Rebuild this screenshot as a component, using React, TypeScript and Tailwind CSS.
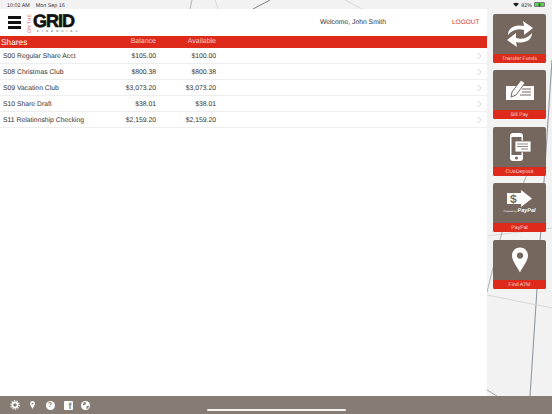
import React from "react";

const rows = [
  ["S00 Regular Share Acct", "$105.00", "$100.00"],
  ["S08 Christmas Club", "$800.38", "$800.38"],
  ["S09 Vacation Club", "$3,073.20", "$3,073.20"],
  ["S10 Share Draft", "$38.01", "$38.01"],
  ["S11 Relationship Checking", "$2,159.20", "$2,159.20"],
];

function Tile({ label, children, mb }: { label: string; children: React.ReactNode; mb: string }) {
  return (
    <div className={`w-[53px] h-[49px] rounded-[2px] bg-[#75675e] flex flex-col overflow-hidden ${mb}`}>
      <div className="flex-1 flex items-center justify-center">{children}</div>
      <div className="h-[9px] bg-[#dd2a1b] text-[#f8dcd8] text-[5.2px] leading-[10px] text-center">{label}</div>
    </div>
  );
}

export default function App() {
  return (
    <div className="relative w-[552px] h-[414px] overflow-hidden bg-[#f2f2f2] font-['Liberation_Sans',Arial,sans-serif] [text-rendering:geometricPrecision]">
      <svg className="absolute inset-0" width="552" height="414" fill="none">
        <path d="M253 9 L270 0" stroke="#808488" strokeWidth="1" />
        <path d="M190 9 L192 0" stroke="#a0a2a5" strokeWidth="0.8" />
        <path d="M215 0 L218 9 M345 0 L362 9" stroke="#d2d2d2" strokeWidth="0.8" />
        <path d="M552 60 L550 90 L530 396" stroke="#8f98a3" strokeWidth="1.1" />
        <path d="M487 295 L552 308 M487 236 L552 228" stroke="#d8d8d8" strokeWidth="1" />
        <path d="M529 170 L502 232 L487 292" stroke="#a3a8ad" strokeWidth="0.9" />
        <path d="M487 390 L497 396" stroke="#9aa0a6" strokeWidth="0.9" />
      </svg>

      <div className="relative h-[9px] flex items-center justify-between pl-[7px] pr-[7px] text-[5.4px] text-[#333]">
        <span className="flex gap-[6px] mt-[3px]"><span>10:02 AM</span><span>Mon Sep 16</span></span>
        <span className="flex items-center gap-[2px]">
          <svg width="6" height="5" viewBox="0 0 12 9"><path d="M6 9 L0 3 Q6 -1.5 12 3 Z" fill="#222" /></svg>
          <span className="mt-[3px]">82%</span>
          <span className="w-[11px] h-[5px] rounded-[1px] border-[0.5px] border-[#777] bg-[#5ed04c] flex items-center justify-center">
            <svg width="3" height="4" viewBox="0 0 6 8"><path d="M3.5 0 L0.5 4.5 H2.5 L2 8 L5.5 3 H3.3 Z" fill="#111" /></svg>
          </span>
        </span>
      </div>

      <div className="relative flex h-[387px]">
        <div className="w-[487px] bg-white flex flex-col">
          <div className="h-[26.5px] flex items-center shrink-0">
            <div className="ml-[8px] w-[13px] flex flex-col gap-[2px]">
              <div className="h-[3px] bg-[#111]" />
              <div className="h-[3px] bg-[#111]" />
              <div className="h-[3px] bg-[#111]" />
            </div>
            <div className="ml-[7px] w-[47px] flex items-start h-[22px]">
              <span className="text-[5px] leading-[5px] text-[#e0574a] [writing-mode:vertical-rl] rotate-180 mt-[4px] h-[18px] text-center whitespace-nowrap">ON THE</span>
              <div className="flex flex-col w-[42px]">
                <span className="text-[18px] leading-[14px] font-bold text-[#111] tracking-[-1px] mt-[3px] [-webkit-text-stroke:0.6px_#111]">GRID</span>
                <span className="text-[2.8px] leading-[3px] tracking-[3.2px] text-[#333] ml-[4px] mt-[2px] whitespace-nowrap">FINANCIAL</span>
              </div>
            </div>
            <div className="ml-[245px] w-[132px] text-[6.8px] leading-[10px] pt-[2px] text-[#333] whitespace-nowrap">Welcome, John Smith</div>
            <div className="text-[6.5px] leading-[10px] pt-[2px] text-[#dd3a2c]">LOGOUT</div>
          </div>

          <div className="h-[12px] pt-[2px] bg-[#dd2a1b] flex items-center text-white shrink-0">
            <span className="ml-[1px] w-[100px] text-[8.3px]">Shares</span>
            <span className="w-[55px] text-right text-[7px] text-[#f6cfca]">Balance</span>
            <span className="w-[60px] text-right text-[7px] text-[#f6cfca]">Available</span>
          </div>

          {rows.map((r) => (
            <div key={r[0]} className="h-[16px] pt-[4px] flex items-center border-b border-[#eee] text-[6.8px] text-[#333] shrink-0 relative">
              <span className="ml-[3px] w-[98px] whitespace-nowrap">{r[0]}</span>
              <span className="w-[55px] text-right">{r[1]}</span>
              <span className="w-[60px] text-right">{r[2]}</span>
              <svg className="absolute left-[477px] top-[4px]" width="5" height="8" viewBox="0 0 5 8" fill="none">
                <path d="M1 1 L4 4 L1 7" stroke="#c8c8c8" strokeWidth="0.8" />
              </svg>
            </div>
          ))}
        </div>

        <div className="flex-1 flex flex-col pl-[6px] pt-[5px]">
          <Tile label="Transfer Funds" mb="mb-[7px]">
            <svg width="28" height="28" viewBox="0 0 28 28" fill="#fff">
              <path d="M2 15 C2 8 9 4 18 6 L17 1 L27 8 L18 15 L18 10 C12 8 6 10 2 15 Z" />
              <path d="M26 13 C26 20 19 24 10 22 L11 27 L1 20 L10 13 L10 18 C16 20 22 18 26 13 Z" />
            </svg>
          </Tile>
          <Tile label="Bill Pay" mb="mb-[8px]">
            <svg width="30" height="24" viewBox="0 0 30 24">
              <rect x="1" y="8" width="28" height="14" fill="#fff" />
              <path d="M6 19 L7 14 L16 2 L20 5 L11 17 Z" fill="#fff" stroke="#75675e" strokeWidth="1" />
              <path d="M17 11 H26 M17 14 H26 M15 17 H26" stroke="#75675e" strokeWidth="1" />
            </svg>
          </Tile>
          <Tile label="CUeDeposit" mb="mb-[7px]">
            <svg width="24" height="30" viewBox="0 0 24 30">
              <rect x="2" y="1" width="13" height="28" rx="3" fill="#fff" />
              <rect x="3.5" y="5" width="10" height="18" fill="#75675e" />
              <circle cx="8.5" cy="26" r="1.5" fill="#75675e" />
              <rect x="7" y="9" width="16" height="11" fill="#fff" stroke="#75675e" strokeWidth="0.8" />
              <path d="M9 12 H20 M9 14.5 H20 M13 17 H20" stroke="#75675e" strokeWidth="0.8" />
            </svg>
          </Tile>
          <Tile label="PayPal" mb="mb-[8px]">
            <div className="flex flex-col items-center -mt-[1px]">
              <svg width="25" height="17" viewBox="0 0 25 17">
                <path d="M0 3 H14 V0 L25 8.5 L14 17 V14 H0 Z" fill="#fff" />
                <text x="3" y="13" fontSize="12" fontWeight="700" fill="#75675e" fontFamily="Liberation Sans">$</text>
              </svg>
              <div className="flex items-baseline gap-[1px] text-white leading-[6px] mt-[1px]">
                <span className="text-[2.5px] whitespace-nowrap">Powered by</span>
                <span className="text-[5.5px] italic font-bold">PayPal</span>
              </div>
            </div>
          </Tile>
          <Tile label="Find ATM" mb="">
            <svg width="16" height="26" viewBox="0 0 18 28">
              <path fillRule="evenodd" d="M9 0 C14 0 18 4 18 9 C18 15 12 22 9 28 C6 22 0 15 0 9 C0 4 4 0 9 0 Z M9 5.5 A3.5 3.5 0 1 0 9 12.5 A3.5 3.5 0 1 0 9 5.5 Z" fill="#fff" />
            </svg>
          </Tile>
        </div>
      </div>

      <div className="relative h-[18px] bg-[#867c74]">
        <div className="flex items-center gap-[9px] pl-[10px] h-[18px]">
          <svg width="10" height="10" viewBox="0 0 10 10" fill="none">
            <circle cx="5" cy="5" r="2.6" stroke="#fff" strokeWidth="1.6" />
            <circle cx="5" cy="5" r="4.2" stroke="#fff" strokeWidth="1.2" strokeDasharray="1.3 1.3" />
          </svg>
          <svg width="5" height="8" viewBox="0 0 18 28" className="ml-[0.5px]">
            <path fillRule="evenodd" d="M9 0 C14 0 18 4 18 9 C18 15 12 22 9 28 C6 22 0 15 0 9 C0 4 4 0 9 0 Z M9 5.5 A3.5 3.5 0 1 0 9 12.5 A3.5 3.5 0 1 0 9 5.5 Z" fill="#fff" />
          </svg>
          <span className="ml-[2px] w-[9px] h-[9px] rounded-full bg-white text-[#867c74] text-[7px] font-bold leading-[9px] text-center">?</span>
          <span className="w-[9px] h-[9px] rounded-[1px] bg-white text-[#867c74] text-[9px] font-bold leading-[10px] text-right pr-[1px] overflow-hidden">f</span>
          <svg width="9" height="9" viewBox="0 0 10 10" className="-ml-[1px]">
            <circle cx="5" cy="5" r="5" fill="#fff" />
            <path d="M3 1 L6 2 L5 4 L2 5 Z M6 6 L9 5 L8 8 L6 9 Z" fill="#867c74" />
          </svg>
        </div>
        <div className="absolute left-[207px] top-[12.5px] w-[139px] h-[2px] rounded-full bg-[#f3f3f3]" />
      </div>
    </div>
  );
}
